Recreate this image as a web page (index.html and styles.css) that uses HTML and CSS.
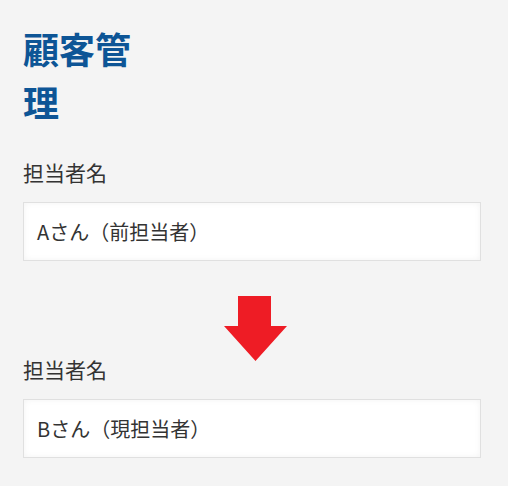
FILE: index.html
```html
<!DOCTYPE html>
<html lang="ja">
<head>
<meta charset="utf-8">
<link rel="stylesheet" href="styles.css">
</head>
<body>
<main class="page">
  <h1 class="title">顧客管理</h1>
  <div class="field">
    <label class="label">担当者名</label>
    <div class="input">Aさん（前担当者）</div>
  </div>
  <div class="arrow">
    <svg width="64" height="66" viewBox="0 0 64 66"><path d="M14 0H47V30H63L31.5 65L0 30H14Z" fill="#ee1c25"/></svg>
  </div>
  <div class="field">
    <label class="label">担当者名</label>
    <div class="input">Bさん（現担当者）</div>
  </div>
</main>
</body>
</html>
```
FILE: styles.css
```css
html, body {
  margin: 0;
  padding: 0;
  background: #f4f4f4;
}
body {
  font-family: "Noto Sans CJK JP", "Noto Sans", sans-serif;
  color: #333;
}
.page {
  padding: 22px 27px 0 23px;
  display: flex;
  flex-direction: column;
}
.title {
  margin: 0 0 3px;
  width: 125px;
  font-size: 36px;
  line-height: 53px;
  font-weight: 700;
  color: #0d5596;
}
.field {
  display: flex;
  flex-direction: column;
}
.label {
  margin-top: 26px;
  font-size: 21px;
  line-height: 30px;
}
.input {
  margin-top: 15px;
  height: 57px;
  border: 1px solid #e0e0e0;
  background: #fff;
  box-shadow: inset 0 0 6px rgba(0,0,0,0.05);
  padding: 0 13px;
  font-size: 20px;
  display: flex;
  align-items: center;
}
.arrow {
  display: flex;
  justify-content: center;
  margin-top: 35px;
  margin-bottom: -34px;
}
.arrow svg { display: block; margin-left: 8px; }
```
